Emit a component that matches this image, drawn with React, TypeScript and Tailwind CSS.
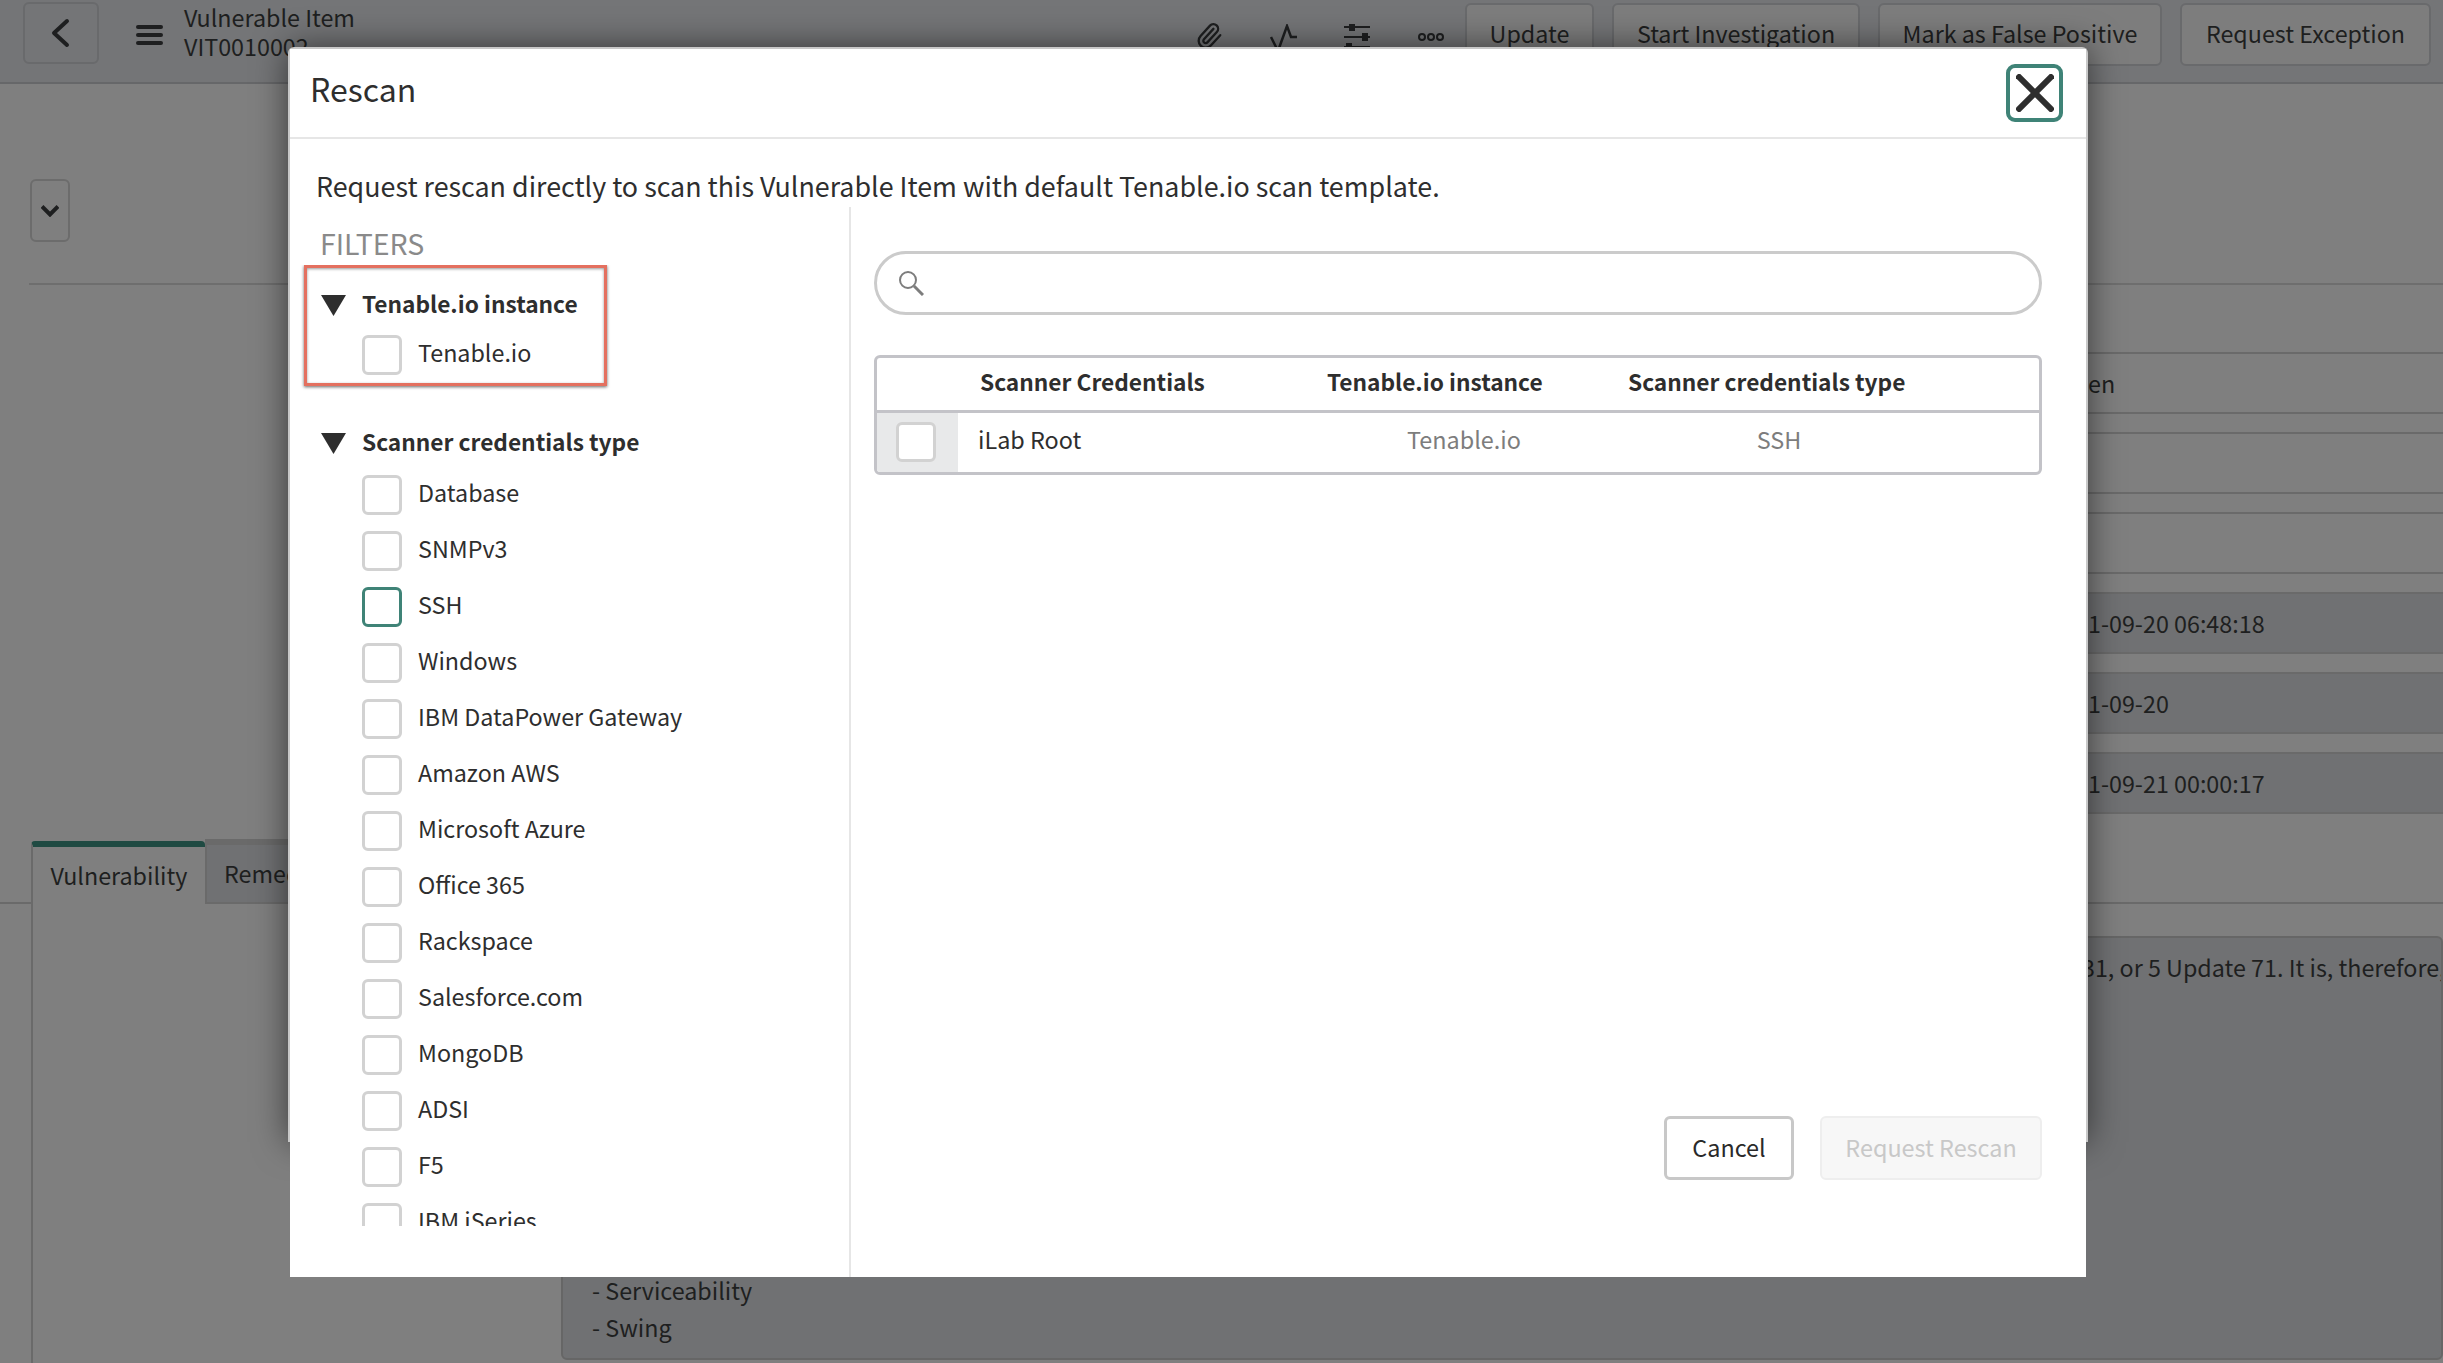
import { Paperclip } from "lucide-react";

const filterOptions = [
  "Database",
  "SNMPv3",
  "SSH",
  "Windows",
  "IBM DataPower Gateway",
  "Amazon AWS",
  "Microsoft Azure",
  "Office 365",
  "Rackspace",
  "Salesforce.com",
  "MongoDB",
  "ADSI",
  "F5",
  "IBM iSeries",
];

const topActions = [
  { label: "Update", width: "w-[129px]" },
  { label: "Start Investigation", width: "w-[248px]" },
  { label: "Mark as False Positive", width: "w-[284px]" },
  { label: "Request Exception", width: "w-[251px]" },
];

const fields = [
  { value: "en", dark: false },
  { value: "", dark: false },
  { value: "", dark: false },
  { value: "1-09-20 06:48:18", dark: true },
  { value: "1-09-20", dark: true },
  { value: "1-09-21 00:00:17", dark: true },
];

function Box({ active }: { active?: boolean }) {
  return (
    <span
      className={`block w-10 h-10 shrink-0 rounded-[6px] border-[3px] bg-white ${
        active ? "border-[#3f8377]" : "border-[#d2d2d2]"
      }`}
    />
  );
}

function Triangle() {
  return (
    <svg width="25" height="21" viewBox="0 0 25 21" className="shrink-0">
      <polygon points="0,0 25,0 12.5,21" fill="#2e2e2e" />
    </svg>
  );
}

function Background() {
  return (
    <div className="flex flex-col h-full text-[23.3px] text-[#1e1f20]">
      {/* Top bar */}
      <div className="h-[84px] shrink-0 flex items-start bg-[#747577] border-b-2 border-[#666769] pl-[23px]">
        <button className="mt-[2px] w-[76px] h-[62px] rounded-[6px] border-2 border-[#696a6c] flex items-center justify-center">
          <svg width="20" height="30" viewBox="0 0 20 30" fill="none" stroke="#1e1f20" strokeWidth="4" strokeLinecap="round" strokeLinejoin="round">
            <polyline points="16,3 3,15 16,27" />
          </svg>
        </button>
        <svg width="27" height="20" viewBox="0 0 27 20" className="mt-[25px] ml-[37px]" stroke="#1e1f20" strokeWidth="4" strokeLinecap="round">
          <line x1="2" y1="2" x2="25" y2="2" />
          <line x1="2" y1="10" x2="25" y2="10" />
          <line x1="2" y1="18" x2="25" y2="18" />
        </svg>
        <div className="ml-[21px] mt-[3px] leading-[29px]">
          <div>Vulnerable Item</div>
          <div>VIT0010002</div>
        </div>
        <div className="ml-auto flex items-start pr-[12px]">
          <Paperclip className="mt-[22px] mr-[47px] w-[28px] h-[28px] rotate-[-2deg]" color="#1e1f20" strokeWidth={2} />
          <svg width="28" height="30" viewBox="0 0 28 30" fill="none" stroke="#1e1f20" strokeWidth="2.5" className="mt-[24px] mr-[46px]">
            <polyline points="1,13 8,27 17,2 21,13 27,13" />
          </svg>
          <svg width="26" height="30" viewBox="0 0 26 30" stroke="#1e1f20" strokeWidth="2" className="mt-[24px] mr-[47px]" fill="#1e1f20">
            <line x1="0" y1="3" x2="26" y2="3" />
            <line x1="0" y1="13" x2="26" y2="13" />
            <line x1="0" y1="23" x2="26" y2="23" />
            <rect x="6" y="0" width="4" height="6" />
            <rect x="19" y="10" width="4" height="6" />
            <rect x="3" y="20" width="4" height="6" />
          </svg>
          <svg width="28" height="10" viewBox="0 0 28 10" fill="none" stroke="#1e1f20" strokeWidth="2" className="mt-[32px] mr-[20px]">
            <circle cx="5" cy="5" r="3" />
            <circle cx="14" cy="5" r="3" />
            <circle cx="23" cy="5" r="3" />
          </svg>
          <div className="flex gap-[18px] mt-[3px]">
            {topActions.map((a) => (
              <button
                key={a.label}
                className={`${a.width} h-[63px] pb-[3px] rounded-[6px] border-2 border-[#696a6c] bg-[#7d7d7d] whitespace-nowrap`}
              >
                {a.label}
              </button>
            ))}
          </div>
        </div>
      </div>

      {/* Record form */}
      <div className="flex-1 min-h-0 flex flex-col bg-[#7f7f7f]">
        <div className="h-[201px] shrink-0 ml-[29px] border-b-2 border-[#6e6e6e] pt-[95px]">
          <button className="ml-[1px] w-[40px] h-[63px] rounded-[6px] border-2 border-[#6c6c6c] flex items-center justify-center">
            <svg width="18" height="12" viewBox="0 0 18 12" fill="none" stroke="#1e1f20" strokeWidth="4">
              <polyline points="1,1.5 9,9.5 17,1.5" />
            </svg>
          </button>
        </div>
        <div className="mt-[67px] ml-auto w-[1000px] flex flex-col gap-[18px]">
          {fields.map((f, i) => (
            <div
              key={i}
              className={`h-[62px] shrink-0 border-y-2 border-[#6a6a6a] flex items-center justify-end pl-[645px] ${
                f.dark ? "bg-[#707173]" : ""
              }`}
            >
              <span className="w-full whitespace-nowrap">{f.value}</span>
            </div>
          ))}
        </div>
        <div className="mt-[25px] h-[65px] shrink-0 flex items-end border-b-2 border-[#6a6a6a] pl-[31px]">
          <div className="w-[174px] h-[63px] -mb-[2px] bg-[#7f7f7f] border-t-[6px] border-[#1f4a42] border-l-2 border-l-[#6a6a6a] flex items-center justify-center rounded-t-[4px]">
            Vulnerability
          </div>
          <div className="w-[300px] h-[63px] bg-[#707173] border-t-[6px] border-[#6a6a6a] border-l-2 pl-[17px] flex items-center">
            Remediation
          </div>
        </div>
        <div className="flex-1 min-h-0 ml-[31px] border-l-2 border-[#6a6a6a] pt-[32px] pl-[528px]">
          <div className="h-[424px] bg-[#707173] border-2 border-[#666] rounded-[6px] flex flex-col justify-between pb-[12px] pl-[29px] overflow-hidden">
            <div className="mt-[12px] pl-[1490px] whitespace-nowrap">31, or 5 Update 71. It is, therefore, affected</div>
            <div className="leading-[37px]">
              <div>- Serviceability</div>
              <div>- Swing</div>
            </div>
          </div>
        </div>
      </div>
    </div>
  );
}

function Modal() {
  return (
    <div className="absolute left-[288px] top-[47px] w-[1800px] h-[1095px] rounded-t-[6px] bg-white border-x-2 border-t-2 border-[#c8c8c8] shadow-[0_0_34px_rgba(0,0,0,0.55)] text-[#2e2e2e]">
      <div className="h-[1228px] bg-white flex flex-col -mb-[133px]">
        {/* Header */}
        <div className="h-[90px] shrink-0 border-b-2 border-[#e6e6e6] flex items-center justify-between pl-[20px] pr-[22px]">
          <h1 className="text-[32px] font-normal leading-none mt-[-10px]">Rescan</h1>
          <button className="w-[57px] h-[58px] rounded-[9px] border-[4px] border-[#3f8377] flex items-center justify-center mr-[1px]">
            <svg width="38" height="38" viewBox="0 0 38 38" stroke="#2e2e2e" strokeWidth="6">
              <line x1="1" y1="1" x2="37" y2="37" />
              <line x1="37" y1="1" x2="1" y2="37" />
            </svg>
          </button>
        </div>

        <p className="shrink-0 h-[68px] pl-[26px] pt-[28px] text-[26.85px] leading-[38px] whitespace-nowrap">
          Request rescan directly to scan this Vulnerable Item with default Tenable.io scan template.
        </p>

        <div className="flex-1 min-h-0 flex">
          {/* Filters */}
          <div className="w-[561px] shrink-0 border-r-2 border-[#e6e6e6]">
            <div className="pl-[30px] pt-[20px] h-[58px] text-[28.5px] leading-[32px] text-[#8a8a8a] shrink-0">FILTERS</div>
            <div className="h-[961px] overflow-hidden pl-[31px] text-[23.3px]">
              <div className="relative h-[158px] pt-[20px]">
                <div className="absolute -left-[17px] top-0 w-[303px] h-[121px] border-[3px] border-[#e4705f] shadow-[0_1px_3px_rgba(0,0,0,0.6),inset_0_1px_3px_rgba(0,0,0,0.4)]" />
                <div className="flex items-center h-[40px] gap-[16px]">
                  <Triangle />
                  <span className="font-bold text-[22.7px] leading-none whitespace-nowrap -mt-[2px]">Tenable.io instance</span>
                </div>
                <div className="flex items-center gap-[16px] ml-[41px] mt-[10px]">
                  <Box />
                  <span className="leading-none mt-[-5px] whitespace-nowrap">Tenable.io</span>
                </div>
              </div>
              <div className="flex items-center h-[40px] gap-[16px]">
                <Triangle />
                <span className="font-bold text-[22.7px] leading-none whitespace-nowrap -mt-[2px]">Scanner credentials type</span>
              </div>
              <div className="mt-[12px] flex flex-col gap-[16px] ml-[41px]">
                {filterOptions.map((o) => (
                  <label key={o} className="flex items-center gap-[16px] h-[40px] shrink-0">
                    <Box active={o === "SSH"} />
                    <span className="leading-none mt-[-5px] whitespace-nowrap">{o}</span>
                  </label>
                ))}
              </div>
            </div>
          </div>

          {/* Results */}
          <div className="flex-1 min-w-0 flex flex-col pl-[23px] pr-[44px] pb-[97px] pt-[44px] text-[23.4px]">
            <div className="h-[64px] shrink-0 rounded-full border-[3px] border-[#cbcbcb] flex items-center pl-[21px]">
              <svg width="26" height="26" viewBox="0 0 26 26" fill="none" stroke="#7d7d7d" strokeWidth="2">
                <circle cx="10" cy="10" r="8" />
                <line x1="16" y1="16" x2="25" y2="25" strokeWidth="3" />
              </svg>
            </div>
            <div className="mt-[40px] h-[120px] shrink-0 rounded-[6px] border-[3px] border-[#c3c3c8] flex flex-col overflow-hidden">
              <div className="h-[55px] shrink-0 flex items-center font-bold text-[22.7px] border-b-[3px] border-[#c3c3c8] leading-none pb-[4px]">
                <span className="ml-[103px] w-[347px] whitespace-nowrap">Scanner Credentials</span>
                <span className="w-[301px] whitespace-nowrap">Tenable.io instance</span>
                <span className="whitespace-nowrap">Scanner credentials type</span>
              </div>
              <div className="flex-1 flex items-center">
                <div className="w-[81px] h-full shrink-0 bg-[#e8e9ea] flex items-center pl-[19px]">
                  <span className="-mt-[2px]">
                    <Box />
                  </span>
                </div>
                <span className="ml-[20px] w-[310px] whitespace-nowrap -mt-[5px]">iLab Root</span>
                <span className="w-[352px] text-center text-[#7d7d7d] -mt-[5px]">Tenable.io</span>
                <span className="w-[278px] text-center text-[#7d7d7d] -mt-[5px]">SSH</span>
              </div>
            </div>
            <div className="mt-auto flex justify-end gap-[26px]">
              <button className="w-[130px] h-[64px] rounded-[6px] border-[3px] border-[#c8c8c8] text-[#2a2a2a]">Cancel</button>
              <button className="w-[222px] h-[64px] rounded-[6px] border-2 border-[#eeeeee] bg-[#f7f7f7] text-[#c8c8c8]">Request Rescan</button>
            </div>
          </div>
        </div>
      </div>
    </div>
  );
}

export default function App() {
  return (
    <div className="relative w-[2443px] h-[1363px] overflow-hidden font-['Noto_Sans_CJK_SC','Noto_Sans',sans-serif]">
      <Background />
      <Modal />
    </div>
  );
}
